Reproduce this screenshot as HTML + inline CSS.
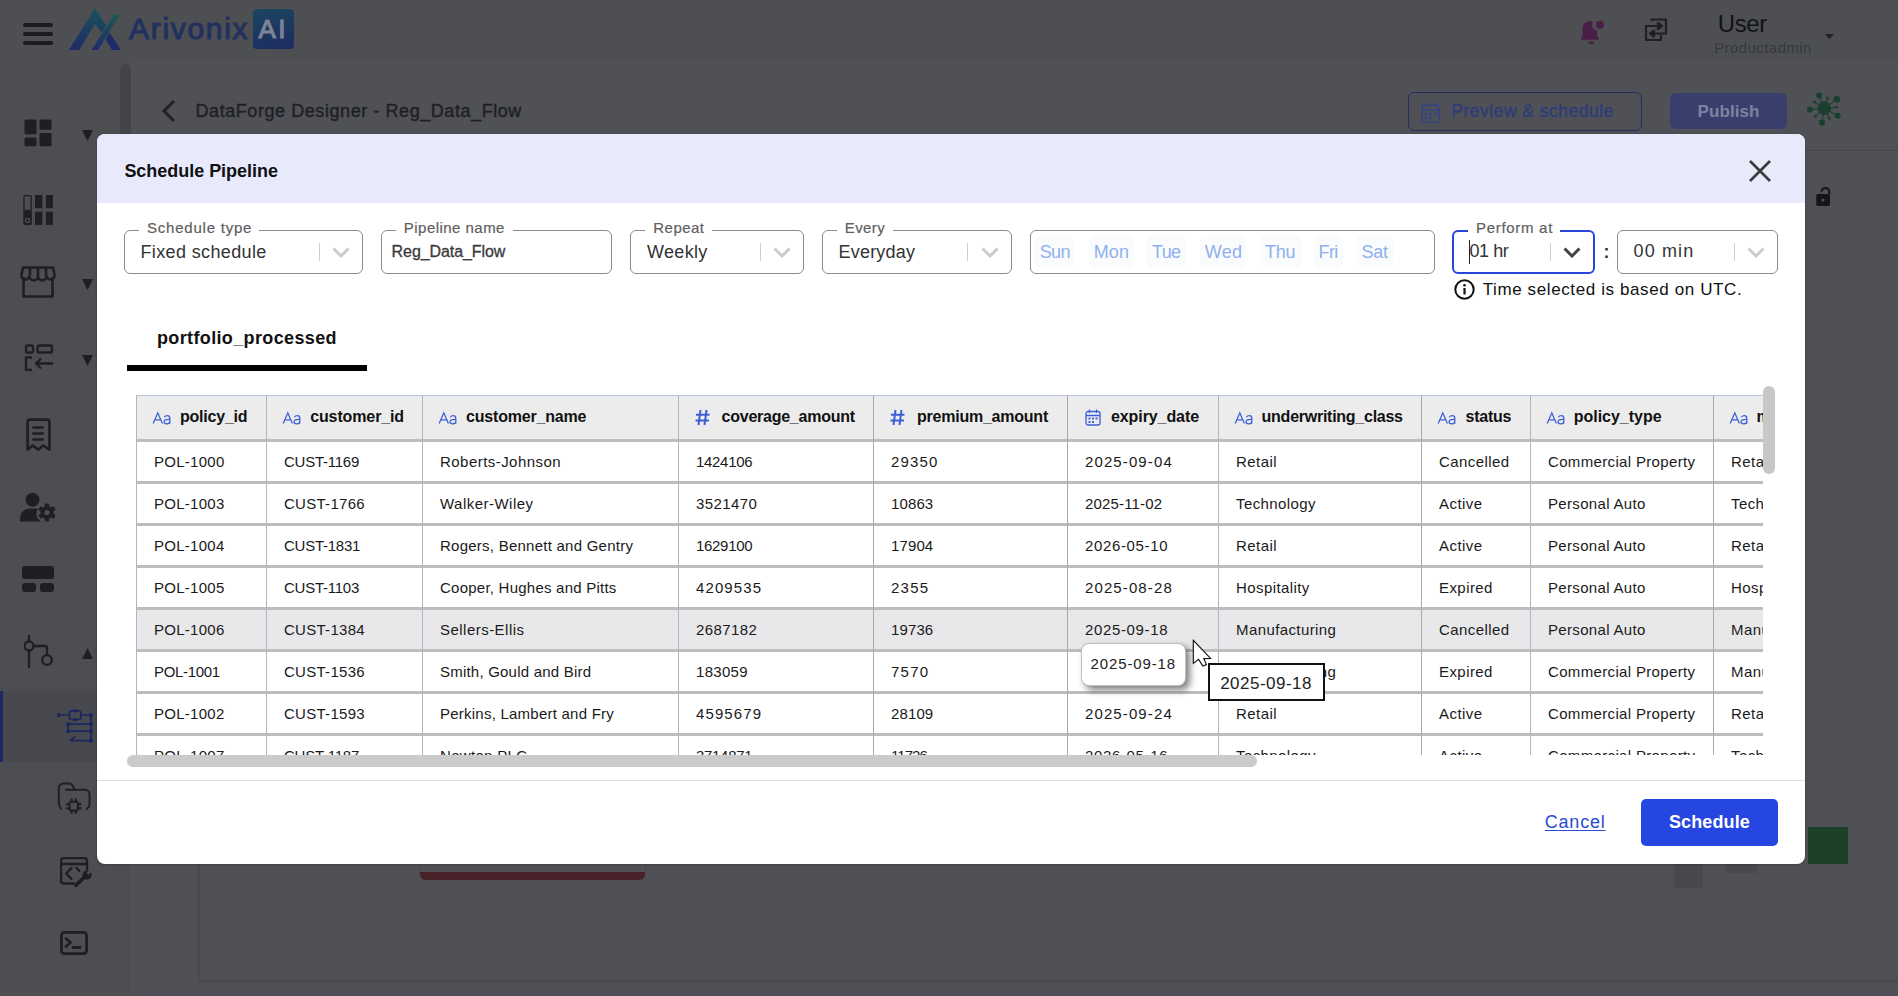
<!DOCTYPE html>
<html><head><meta charset="utf-8"><style>
html,body{margin:0;padding:0;}
body{width:1898px;height:996px;overflow:hidden;position:relative;background:#4f5156;font-family:"Liberation Sans",sans-serif;}
.t{position:absolute;white-space:nowrap;line-height:1;}
.r{position:absolute;}
</style></head><body>
<div class="r" style="left:0px;top:0px;width:1898px;height:61px;background:#4d4f53"></div>
<div class="r" style="left:0px;top:61px;width:130px;height:935px;background:#4c4e52"></div>
<div class="r" style="left:120px;top:64px;width:11px;height:536px;background:#424448;border-radius:6px"></div>
<div class="r" style="left:0px;top:691px;width:97px;height:71px;background:#47494e"></div>
<div class="r" style="left:0px;top:691px;width:3px;height:71px;background:#1d2a62"></div>
<div class="r" style="left:199px;top:150px;width:1699px;height:830px;border-left:1px solid #46484c;box-shadow:0 2px 4px rgba(0,0,0,0.12)"></div>
<div class="r" style="left:130px;top:150px;width:1768px;height:1px;background:#434549"></div>
<div class="r" style="left:23px;top:23px;width:30px;height:4px;background:#1b1c20;border-radius:2px"></div>
<div class="r" style="left:23px;top:32px;width:30px;height:4px;background:#1b1c20;border-radius:2px"></div>
<div class="r" style="left:23px;top:41px;width:30px;height:4px;background:#1b1c20;border-radius:2px"></div>
<svg class="r" style="left:60px;top:0px" width="70" height="60" viewBox="0 0 70 60">
<defs><linearGradient id="lg" x1="0" y1="8" x2="0" y2="50" gradientUnits="userSpaceOnUse"><stop offset="0" stop-color="#1a5459"/><stop offset="1" stop-color="#1e2a68"/></linearGradient>
<linearGradient id="lg2" x1="0" y1="14" x2="0" y2="50" gradientUnits="userSpaceOnUse"><stop offset="0" stop-color="#1a5a55"/><stop offset="1" stop-color="#1f2a6a"/></linearGradient></defs>
<path d="M9 50 L35 8 L46 25.5 L41.8 32.5 L35 24 L19 50 Z" fill="url(#lg)"/>
<path d="M31.5 50 L54.5 14.2 L60.2 14.2 L38 50 Z" fill="url(#lg2)"/>
<path d="M49.5 32.5 L61 50 L52 50 L45.8 39.5 Z" fill="#1e2a68"/>
</svg>
<div class="t" style="left:129.10px;top:14.40px;font-size:30px;color:#22305f;font-weight:400;letter-spacing:1.686px;-webkit-text-stroke:1.1px #22305f">Arivonix</div>
<div class="r" style="left:253px;top:9px;width:41px;height:39.5px;border-radius:4px;background:linear-gradient(165deg,#1a4760,#1e2b62)"></div>
<div class="t" style="left:258.60px;top:15.69px;font-size:26px;color:#7e8496;font-weight:400;letter-spacing:2.200px;-webkit-text-stroke:1px #7e8496">AI</div>
<svg class="r" style="left:1570px;top:10px" width="40" height="40" viewBox="0 0 40 40">
<path d="M11.3 29 L13.2 26.5 V18 A6.5 6.5 0 0 1 22 12.3 A6 6 0 0 0 26.5 21 V26.5 L28.2 29 Z" fill="#4a1f47" stroke="#4a1f47" stroke-width="1.4" stroke-linejoin="round"/>
<rect x="18.5" y="31.6" width="5.8" height="2.4" rx="1.2" fill="#4a1f47"/>
<circle cx="29.9" cy="14.8" r="4" fill="#4a1f47"/>
</svg>
<svg class="r" style="left:1640px;top:14px" width="32" height="32" viewBox="0 0 32 32" fill="none" stroke="#1f2024" stroke-width="2.2" stroke-linejoin="round">
<path d="M11.5 7 V5.5 H26 V19.5 H14"/><path d="M21 21 V26 H6 V12 H18"/>
<path d="M18 9 L22 12 L18 15 Z" fill="#1f2024"/><path d="M14 16.5 L10 19.5 L14 22.5 Z" fill="#1f2024"/>
</svg>
<div class="t" style="left:1717.80px;top:11.58px;font-size:24px;color:#111214;font-weight:400;letter-spacing:-0.400px;">User</div>
<div class="t" style="left:1714.20px;top:40.10px;font-size:15px;color:#36383d;font-weight:400;letter-spacing:0.427px;">Productadmin</div>
<svg class="r" style="left:1825px;top:34px" width="9" height="5" viewBox="0 0 9 5"><path d="M0 0H9L4.5 5Z" fill="#1f2126"/></svg>
<svg class="r" style="left:160px;top:99px" width="17" height="24" viewBox="0 0 17 24"><path d="M14 2 L4 12 L14 22" fill="none" stroke="#202124" stroke-width="3"/></svg>
<div class="t" style="left:195.50px;top:101.56px;font-size:18px;color:#1f2024;font-weight:400;letter-spacing:0.567px;-webkit-text-stroke:0.4px #1f2024">DataForge Designer - Reg_Data_Flow</div>
<div class="r" style="left:1408px;top:92px;width:234px;height:39px;border:1.2px solid #272d5c;border-radius:6px;box-sizing:border-box"></div>
<svg class="r" style="left:1421px;top:101px" width="19" height="22" viewBox="0 0 19 22" fill="none" stroke="#34457f" stroke-width="1.6">
<rect x="1" y="4" width="17" height="17" rx="2"/><path d="M1 9 H18"/><path d="M5 1 V6 M14 1 V6"/>
<circle cx="5" cy="13" r="0.8" fill="#34457f"/><circle cx="9.5" cy="13" r="0.8" fill="#34457f"/><circle cx="14" cy="13" r="0.8" fill="#34457f"/>
<circle cx="5" cy="17" r="0.8" fill="#34457f"/><circle cx="9.5" cy="17" r="0.8" fill="#34457f"/>
</svg>
<div class="t" style="left:1451.40px;top:103.39px;font-size:17.5px;color:#2d3c78;font-weight:400;letter-spacing:0.482px;-webkit-text-stroke:0.3px #2d3c78">Preview &amp; schedule</div>
<div class="r" style="left:1670px;top:93px;width:117px;height:36px;background:#383f6d;border-radius:6px"></div>
<div class="t" style="left:1697.60px;top:102.61px;font-size:17px;color:#7d82a0;font-weight:700;letter-spacing:0.067px;">Publish</div>
<svg class="r" style="left:1800px;top:85px" width="45" height="45" viewBox="0 0 45 45"><circle cx="24.2" cy="23.1" r="6.8" fill="#1a3f2e"/><line x1="24.2" y1="23.1" x2="19.1" y2="10.4" stroke="#1a3f2e" stroke-width="1.1"/><circle cx="19.1" cy="10.4" r="3" fill="#1a3f2e"/><line x1="24.2" y1="23.1" x2="27.7" y2="13.0" stroke="#1a3f2e" stroke-width="1.1"/><circle cx="27.7" cy="13.0" r="1.6" fill="#1a3f2e"/><line x1="24.2" y1="23.1" x2="36.8" y2="14.2" stroke="#1a3f2e" stroke-width="1.1"/><circle cx="36.8" cy="14.2" r="3.3" fill="#1a3f2e"/><line x1="24.2" y1="23.1" x2="14.3" y2="17.0" stroke="#1a3f2e" stroke-width="1.1"/><circle cx="14.3" cy="17.0" r="1.5" fill="#1a3f2e"/><line x1="24.2" y1="23.1" x2="10.0" y2="24.5" stroke="#1a3f2e" stroke-width="1.1"/><circle cx="10.0" cy="24.5" r="3" fill="#1a3f2e"/><line x1="24.2" y1="23.1" x2="36.4" y2="22.2" stroke="#1a3f2e" stroke-width="1.1"/><circle cx="36.4" cy="22.2" r="1.5" fill="#1a3f2e"/><line x1="24.2" y1="23.1" x2="37.6" y2="30.8" stroke="#1a3f2e" stroke-width="1.1"/><circle cx="37.6" cy="30.8" r="3" fill="#1a3f2e"/><line x1="24.2" y1="23.1" x2="15.3" y2="31.3" stroke="#1a3f2e" stroke-width="1.1"/><circle cx="15.3" cy="31.3" r="1.5" fill="#1a3f2e"/><line x1="24.2" y1="23.1" x2="29.2" y2="33.2" stroke="#1a3f2e" stroke-width="1.1"/><circle cx="29.2" cy="33.2" r="1.5" fill="#1a3f2e"/><line x1="24.2" y1="23.1" x2="22.0" y2="37.4" stroke="#1a3f2e" stroke-width="1.1"/><circle cx="22.0" cy="37.4" r="3" fill="#1a3f2e"/></svg>
<div class="r" style="left:1808px;top:177px;width:34px;height:41px;border:1px solid #4c4e52;box-sizing:border-box"></div>
<svg class="r" style="left:1812px;top:184px" width="22" height="26" viewBox="0 0 22 26">
<path d="M9.5 7.8 A3.9 3.9 0 0 1 17.3 7.8 V10.5" fill="none" stroke="#141518" stroke-width="2"/>
<rect x="4.2" y="10" width="13.8" height="12" rx="2" fill="#141518"/><circle cx="11" cy="16" r="1.6" fill="#4f5156"/>
</svg>
<div class="r" style="left:1643px;top:160px;width:227px;height:740px;border:1px solid #4c4e52;border-radius:0 0 8px 8px;box-sizing:border-box"></div>
<div class="r" style="left:1808px;top:827px;width:40px;height:37px;background:#1e3f28"></div>
<div class="r" style="left:1674px;top:864px;width:29px;height:24px;background:#48494e"></div>
<div class="r" style="left:1725px;top:864px;width:32px;height:9px;background:#48494e"></div>
<div class="r" style="left:419px;top:860px;width:227px;height:20px;border:1px solid #47494d;border-top:none;border-radius:0 0 7px 7px;box-sizing:border-box"></div>
<div class="r" style="left:420px;top:872px;width:225px;height:8px;background:#4a2128;border-radius:0 0 6px 6px"></div>
<svg class="r" style="left:24px;top:119px" width="28" height="28" viewBox="0 0 28 28" fill="#1e1f23">
<rect x="0.5" y="0.6" width="12" height="14.6" rx="1.5"/><rect x="15.5" y="0.6" width="12" height="10.2" rx="1.5"/>
<rect x="0.5" y="18.6" width="12" height="8.6" rx="1.5"/><rect x="15.5" y="14" width="12" height="13.2" rx="1.5"/>
</svg>
<svg class="r" style="left:82px;top:130px" width="11" height="11" viewBox="0 0 11 11" preserveAspectRatio="none"><path d="M0 0H11L5.5 11Z" fill="#1e1f23"/></svg>
<svg class="r" style="left:82px;top:279px" width="11" height="11" viewBox="0 0 11 11" preserveAspectRatio="none"><path d="M0 0H11L5.5 11Z" fill="#1e1f23"/></svg>
<svg class="r" style="left:82px;top:355px" width="11" height="11" viewBox="0 0 11 11" preserveAspectRatio="none"><path d="M0 0H11L5.5 11Z" fill="#1e1f23"/></svg>
<svg class="r" style="left:82px;top:648px" width="11" height="11" viewBox="0 0 11 11"><path d="M0 11H11L5.5 0Z" fill="#1e1f23"/></svg>
<svg class="r" style="left:23px;top:195px" width="31" height="31" viewBox="0 0 31 31" fill="#1e1f23">
<rect x="0.3" y="0" width="8.5" height="30" rx="1.6"/><rect x="1.6" y="1.3" width="5.9" height="13.5" fill="#4c4e52"/><circle cx="4.5" cy="25.4" r="2.7" fill="#4c4e52"/><circle cx="4.5" cy="25.4" r="1.3" fill="#1e1f23"/>
<rect x="12" y="0" width="7.4" height="13.2"/><rect x="22.9" y="0" width="7" height="13.2"/>
<rect x="12" y="16.7" width="7.4" height="13.2"/><rect x="22.9" y="16.7" width="7" height="13.2"/>
</svg>
<svg class="r" style="left:20px;top:266px" width="36" height="32" viewBox="0 0 36 32" fill="none" stroke="#1e1f23" stroke-width="2.6" stroke-linejoin="round">
<path d="M3 1.5 H33 L34.5 9 A4 4 0 0 1 26.5 10 A4 4 0 0 1 18 10 A4 4 0 0 1 9.5 10 A4 4 0 0 1 1.5 9 Z"/>
<path d="M10 2 V9 M18 2 V9 M26 2 V9"/><path d="M3.5 11 V30.5 H32.5 V11"/>
</svg>
<svg class="r" style="left:24px;top:344px" width="31" height="27" viewBox="0 0 31 27" fill="none" stroke="#1e1f23" stroke-width="2.3">
<rect x="2" y="1.5" width="7" height="7" rx="1.5"/><rect x="13.5" y="1.5" width="14.5" height="7" rx="1.5"/>
<path d="M8 13.5 H2 V26 H8"/><path d="M29 19.5 H12 M17 14.5 L12 19.5 L17 24.5"/>
</svg>
<svg class="r" style="left:26px;top:418px" width="25" height="34" viewBox="0 0 25 34" fill="none" stroke="#1e1f23" stroke-width="2.6" stroke-linejoin="round" stroke-linecap="round">
<path d="M1.6 31.6 V3.6 A2 2 0 0 1 3.6 1.6 H21.4 A2 2 0 0 1 23.4 3.6 V31.6 L17.1 27.6 L12.5 31.6 L6.6 27.6 Z"/><path d="M7.4 9.5 H16.7 M7.4 15.5 H16.7 M7.4 21.5 H16.7"/>
</svg>
<svg class="r" style="left:20px;top:492px" width="36" height="32" viewBox="0 0 36 32" fill="#1e1f23">
<circle cx="12.5" cy="7.7" r="7"/><path d="M0 29.5 V26 A9.5 9.5 0 0 1 9.5 16.5 H15.5 A9 9 0 0 1 18 17 A8.5 8.5 0 0 0 21 29.5 Z"/>
<circle cx="27" cy="20.5" r="6.5"/><rect x="24.8" y="11.6" width="4.4" height="4.5" rx="0.8" transform="rotate(0 27 20.5)"/><rect x="24.8" y="11.6" width="4.4" height="4.5" rx="0.8" transform="rotate(60 27 20.5)"/><rect x="24.8" y="11.6" width="4.4" height="4.5" rx="0.8" transform="rotate(120 27 20.5)"/><rect x="24.8" y="11.6" width="4.4" height="4.5" rx="0.8" transform="rotate(180 27 20.5)"/><rect x="24.8" y="11.6" width="4.4" height="4.5" rx="0.8" transform="rotate(240 27 20.5)"/><rect x="24.8" y="11.6" width="4.4" height="4.5" rx="0.8" transform="rotate(300 27 20.5)"/><circle cx="27" cy="20.5" r="2.6" fill="#4c4e52"/>
</svg>
<svg class="r" style="left:22px;top:566px" width="32" height="26" viewBox="0 0 32 26" fill="#1e1f23">
<rect x="0" y="0" width="32" height="13" rx="3"/><rect x="0" y="17" width="14" height="9" rx="3"/><rect x="18" y="17" width="14" height="9" rx="3"/>
</svg>
<svg class="r" style="left:24px;top:635px" width="30" height="33" viewBox="0 0 30 33" fill="none" stroke="#1e1f23" stroke-width="2.3">
<path d="M5 0 V33"/><circle cx="5" cy="11" r="4.5" fill="#4c4e52"/><path d="M9.5 11 H21 Q23 11 23 13 V20"/><circle cx="23" cy="25" r="4.8"/>
</svg>
<svg class="r" style="left:57px;top:709px" width="37" height="35" viewBox="0 0 37 35" fill="none" stroke="#1c2760" stroke-width="1.7"><path d="M1.5 6 H12.5 M23.8 6 H34 V31.6 M11 15.2 H34 M11 15.2 V22.2 M11 22.2 H34 M13 31.6 H34 M13 31.6 L18 27.5"/><rect x="12.5" y="1.8" width="11.3" height="8.7" rx="1.5"/><rect x="-0.30000000000000004" y="4.2" width="3.6" height="3.6" fill="#1c2760" stroke="none"/><rect x="16.4" y="0.19999999999999996" width="3.2" height="3.2" fill="#1c2760" stroke="none"/><rect x="16.4" y="8.9" width="3.2" height="3.2" fill="#1c2760" stroke="none"/><rect x="32.2" y="4.2" width="3.6" height="3.6" fill="#1c2760" stroke="none"/><rect x="9.2" y="13.399999999999999" width="3.6" height="3.6" fill="#1c2760" stroke="none"/><rect x="32.2" y="13.399999999999999" width="3.6" height="3.6" fill="#1c2760" stroke="none"/><rect x="9.2" y="20.4" width="3.6" height="3.6" fill="#1c2760" stroke="none"/><rect x="32.2" y="20.4" width="3.6" height="3.6" fill="#1c2760" stroke="none"/><rect x="32.2" y="29.8" width="3.6" height="3.6" fill="#1c2760" stroke="none"/></svg>
<svg class="r" style="left:50px;top:775px" width="50" height="50" viewBox="0 0 50 50" fill="none" stroke="#1e1f23" stroke-width="2" stroke-linecap="round" stroke-linejoin="round">
<path d="M11 33.8 Q8.8 31.5 8.8 27.5 V13.2 A4.7 4.7 0 0 1 13.5 8.5 H19.5 Q22 8.5 23.5 12.5 L24.3 14.7"/>
<path d="M16 14.8 H35 A4.5 4.5 0 0 1 39.5 19.3 V29.5 Q39.5 32 36.8 34"/>
<rect x="19.6" y="26.8" width="8.3" height="8.7" rx="1.3"/>
<path d="M21.6 23.4 V26.8 M25.9 23.4 V26.8 M21.6 35.5 V38.8 M25.9 35.5 V38.8 M16 29.2 H19.6 M16 33.2 H19.6 M27.9 29.2 H31.5 M27.9 33.2 H31.5" stroke-linecap="butt"/>
</svg>
<svg class="r" style="left:60px;top:857px" width="34" height="32" viewBox="0 0 34 32" fill="none" stroke="#1e1f23" stroke-width="2.4" stroke-linecap="round" stroke-linejoin="round">
<path d="M14 26.5 H3.8 A2.8 2.8 0 0 1 1 23.7 V3.8 A2.8 2.8 0 0 1 3.8 1 H24.2 A2.8 2.8 0 0 1 27 3.8 V12.5"/><path d="M1 7 H27"/>
<path d="M11.3 11.2 L6.2 16.5 L11.3 21.8 M16.5 11 L19.3 13.8"/>
<path d="M16 28.3 L24 20.5" stroke-width="3.6"/>
<circle cx="27" cy="18" r="4.6" fill="#1e1f23" stroke="none"/>
<path d="M27.5 16.8 L31.5 12.8" stroke="#4c4e52" stroke-width="2.6" stroke-linecap="butt"/>
</svg>
<svg class="r" style="left:60px;top:931px" width="28" height="24" viewBox="0 0 28 24" fill="none" stroke="#1e1f23" stroke-width="2.8" stroke-linecap="round" stroke-linejoin="round">
<rect x="1.4" y="1.4" width="25.2" height="21.2" rx="3"/><path d="M6 7.5 L10.5 11.5 L6 15.5 M13 16.5 H20"/>
</svg>
<div class="r" style="left:97px;top:134px;width:1708px;height:730px;background:#fff;border-radius:8px;overflow:hidden;box-shadow:0 1px 3px rgba(0,0,0,0.25)">
<div class="r" style="left:0;top:0;width:1708px;height:69px;background:#e8eafc"></div>
</div>
<div class="t" style="left:124.40px;top:161.76px;font-size:18px;color:#111;font-weight:700;letter-spacing:-0.031px;">Schedule Pipeline</div>
<svg class="r" style="left:1748px;top:159px" width="24" height="24" viewBox="0 0 24 24"><path d="M2 2 L22 22 M22 2 L2 22" stroke="#3a3a3a" stroke-width="2.6"/></svg>
<div class="r" style="left:124px;top:230px;width:239px;height:44px;border:1px solid #8c8c8c;border-radius:6px;box-sizing:border-box"></div>
<div class="r" style="left:139px;top:228px;width:120px;height:5px;background:#fff"></div>
<div class="t" style="left:147.00px;top:219.60px;font-size:15px;color:#606060;font-weight:400;letter-spacing:0.775px;-webkit-text-stroke:0.2px #606060">Schedule type</div>
<div class="t" style="left:140.40px;top:243.06px;font-size:18px;color:#333;font-weight:400;letter-spacing:0.377px;">Fixed schedule</div>
<div class="r" style="left:319px;top:243px;width:1px;height:18px;background:#cccccc"></div>
<svg class="r" style="left:332px;top:247px" width="18" height="11" viewBox="0 0 18 11"><path d="M1.5 1.5 L9 9 L16.5 1.5" fill="none" stroke="#cccccc" stroke-width="3"/></svg>
<div class="r" style="left:381px;top:230px;width:231px;height:44px;border:1px solid #8c8c8c;border-radius:6px;box-sizing:border-box"></div>
<div class="r" style="left:396px;top:228px;width:117px;height:5px;background:#fff"></div>
<div class="t" style="left:403.80px;top:219.60px;font-size:15px;color:#606060;font-weight:400;letter-spacing:0.467px;-webkit-text-stroke:0.2px #606060">Pipeline name</div>
<div class="t" style="left:391.60px;top:244.26px;font-size:16px;color:#3a3a3a;font-weight:400;letter-spacing:-0.083px;-webkit-text-stroke:0.3px #3a3a3a">Reg_Data_Flow</div>
<div class="r" style="left:630px;top:230px;width:174px;height:44px;border:1px solid #8c8c8c;border-radius:6px;box-sizing:border-box"></div>
<div class="r" style="left:645px;top:228px;width:67px;height:5px;background:#fff"></div>
<div class="t" style="left:653.30px;top:219.60px;font-size:15px;color:#606060;font-weight:400;letter-spacing:0.460px;-webkit-text-stroke:0.2px #606060">Repeat</div>
<div class="t" style="left:647.00px;top:243.06px;font-size:18px;color:#333;font-weight:400;letter-spacing:0.320px;">Weekly</div>
<div class="r" style="left:760px;top:243px;width:1px;height:18px;background:#cccccc"></div>
<svg class="r" style="left:773px;top:247px" width="18" height="11" viewBox="0 0 18 11"><path d="M1.5 1.5 L9 9 L16.5 1.5" fill="none" stroke="#cccccc" stroke-width="3"/></svg>
<div class="r" style="left:822px;top:230px;width:190px;height:44px;border:1px solid #8c8c8c;border-radius:6px;box-sizing:border-box"></div>
<div class="r" style="left:837px;top:228px;width:56px;height:5px;background:#fff"></div>
<div class="t" style="left:844.80px;top:219.60px;font-size:15px;color:#606060;font-weight:400;letter-spacing:0.375px;-webkit-text-stroke:0.2px #606060">Every</div>
<div class="t" style="left:838.50px;top:243.06px;font-size:18px;color:#333;font-weight:400;letter-spacing:0.214px;">Everyday</div>
<div class="r" style="left:967px;top:243px;width:1px;height:18px;background:#cccccc"></div>
<svg class="r" style="left:981px;top:247px" width="18" height="11" viewBox="0 0 18 11"><path d="M1.5 1.5 L9 9 L16.5 1.5" fill="none" stroke="#cccccc" stroke-width="3"/></svg>
<div class="r" style="left:1030px;top:230px;width:405px;height:44px;border:1px solid #8c8c8c;border-radius:6px;box-sizing:border-box"></div>
<div class="r" style="left:1035px;top:235px;width:40px;height:33px;background:#fafbfc;border-radius:6px"></div>
<div class="t" style="left:1039.70px;top:242.76px;font-size:18px;color:#8fb0ef;font-weight:400;letter-spacing:-0.600px;">Sun</div>
<div class="r" style="left:1089px;top:235px;width:45px;height:33px;background:#fafbfc;border-radius:6px"></div>
<div class="t" style="left:1093.70px;top:242.76px;font-size:18px;color:#8fb0ef;font-weight:400;letter-spacing:0.150px;">Mon</div>
<div class="r" style="left:1147px;top:235px;width:39px;height:33px;background:#fafbfc;border-radius:6px"></div>
<div class="t" style="left:1152.00px;top:242.76px;font-size:18px;color:#8fb0ef;font-weight:400;letter-spacing:-0.700px;">Tue</div>
<div class="r" style="left:1200px;top:235px;width:46px;height:33px;background:#fafbfc;border-radius:6px"></div>
<div class="t" style="left:1204.80px;top:242.76px;font-size:18px;color:#8fb0ef;font-weight:400;letter-spacing:0.250px;">Wed</div>
<div class="r" style="left:1260px;top:235px;width:41px;height:33px;background:#fafbfc;border-radius:6px"></div>
<div class="t" style="left:1265.00px;top:242.76px;font-size:18px;color:#8fb0ef;font-weight:400;letter-spacing:-0.300px;">Thu</div>
<div class="r" style="left:1314px;top:235px;width:29px;height:33px;background:#fafbfc;border-radius:6px"></div>
<div class="t" style="left:1318.60px;top:242.76px;font-size:18px;color:#8fb0ef;font-weight:400;letter-spacing:-0.650px;">Fri</div>
<div class="r" style="left:1356px;top:235px;width:37px;height:33px;background:#fafbfc;border-radius:6px"></div>
<div class="t" style="left:1361.50px;top:242.76px;font-size:18px;color:#8fb0ef;font-weight:400;letter-spacing:-0.250px;">Sat</div>
<div class="r" style="left:1452px;top:230px;width:143px;height:44px;border:2px solid #2a45d8;border-radius:6px;box-sizing:border-box"></div>
<div class="r" style="left:1468px;top:228px;width:92px;height:5px;background:#fff"></div>
<div class="t" style="left:1476.00px;top:219.60px;font-size:15px;color:#606060;font-weight:400;letter-spacing:0.700px;-webkit-text-stroke:0.2px #606060">Perform at</div>
<div class="t" style="left:1469.40px;top:242.26px;font-size:18px;color:#333;font-weight:400;letter-spacing:-0.425px;">01 hr</div>
<div class="r" style="left:1469px;top:240px;width:1px;height:24px;background:#222"></div>
<div class="r" style="left:1550px;top:243px;width:1px;height:18px;background:#cccccc"></div>
<svg class="r" style="left:1563px;top:247px" width="18" height="11" viewBox="0 0 18 11"><path d="M1.5 1.5 L9 9 L16.5 1.5" fill="none" stroke="#444444" stroke-width="3"/></svg>
<div class="t" style="left:1603.50px;top:242.76px;font-size:18px;color:#333;font-weight:700;letter-spacing:0.000px;">:</div>
<div class="r" style="left:1617px;top:230px;width:161px;height:44px;border:1px solid #8c8c8c;border-radius:6px;box-sizing:border-box"></div>
<div class="t" style="left:1633.50px;top:242.26px;font-size:18px;color:#333;font-weight:400;letter-spacing:1.140px;">00 min</div>
<div class="r" style="left:1734px;top:243px;width:1px;height:18px;background:#cccccc"></div>
<svg class="r" style="left:1747px;top:247px" width="18" height="11" viewBox="0 0 18 11"><path d="M1.5 1.5 L9 9 L16.5 1.5" fill="none" stroke="#cccccc" stroke-width="3"/></svg>
<svg class="r" style="left:1454px;top:279px" width="21" height="21" viewBox="0 0 21 21"><circle cx="10.5" cy="10.5" r="9.2" fill="none" stroke="#111" stroke-width="2"/><rect x="9.4" y="9" width="2.2" height="6.5" fill="#111"/><circle cx="10.5" cy="6.3" r="1.3" fill="#111"/></svg>
<div class="t" style="left:1482.70px;top:281.41px;font-size:17px;color:#111;font-weight:400;letter-spacing:0.610px;">Time selected is based on UTC.</div>
<div class="t" style="left:157.00px;top:328.76px;font-size:18px;color:#111;font-weight:700;letter-spacing:0.361px;">portfolio_processed</div>
<div class="r" style="left:127px;top:365px;width:240px;height:6px;background:#000"></div>
<div class="r" style="left:127px;top:380px;width:1636px;height:375px;overflow:hidden">
<div class="r" style="left:9px;top:15px;width:1764px;height:44px;background:#ececec"></div>
<div class="r" style="left:9px;top:15px;width:1764px;height:1px;background:#b7c6d8"></div>
<div class="r" style="left:9px;top:230px;width:1764px;height:39px;background:#e8e8ea"></div>
<div class="r" style="left:9px;top:59px;width:1764px;height:3px;background:#bdbdbd"></div>
<div class="r" style="left:9px;top:101px;width:1764px;height:3px;background:#bdbdbd"></div>
<div class="r" style="left:9px;top:143px;width:1764px;height:3px;background:#bdbdbd"></div>
<div class="r" style="left:9px;top:185px;width:1764px;height:3px;background:#bdbdbd"></div>
<div class="r" style="left:9px;top:227px;width:1764px;height:3px;background:#bdbdbd"></div>
<div class="r" style="left:9px;top:269px;width:1764px;height:3px;background:#bdbdbd"></div>
<div class="r" style="left:9px;top:311px;width:1764px;height:3px;background:#bdbdbd"></div>
<div class="r" style="left:9px;top:353px;width:1764px;height:3px;background:#bdbdbd"></div>
<div class="r" style="left:9px;top:395px;width:1764px;height:3px;background:#bdbdbd"></div>
<div class="r" style="left:9px;top:15px;width:1px;height:405px;background:#a9b8c9"></div>
<div class="r" style="left:139px;top:15px;width:1px;height:405px;background:#a9b8c9"></div>
<div class="r" style="left:295px;top:15px;width:1px;height:405px;background:#a9b8c9"></div>
<div class="r" style="left:551px;top:15px;width:1px;height:405px;background:#a9b8c9"></div>
<div class="r" style="left:746px;top:15px;width:1px;height:405px;background:#aaaaaa"></div>
<div class="r" style="left:940px;top:15px;width:1px;height:405px;background:#aaaaaa"></div>
<div class="r" style="left:1091px;top:15px;width:1px;height:405px;background:#a9b8c9"></div>
<div class="r" style="left:1294px;top:15px;width:1px;height:405px;background:#aaaaaa"></div>
<div class="r" style="left:1403px;top:15px;width:1px;height:405px;background:#a9b8c9"></div>
<div class="r" style="left:1586px;top:15px;width:1px;height:405px;background:#aaaaaa"></div>
<svg class="r" style="left:25.0px;top:31px" width="20" height="14" viewBox="0 0 20 14" fill="none" stroke="#3d5fd6" stroke-width="1.25"><path d="M1.2 12.6 L5.8 1.8 L10.4 12.6 M2.9 8.8 H8.8"/><path d="M12.3 6.2 Q13.2 4.7 15.2 4.7 Q17.8 4.7 17.8 7.2 V12.8 M17.8 8.4 Q12 8.2 12 10.8 Q12 12.9 14.6 12.9 Q17.4 12.9 17.8 10.6"/></svg>
<div class="t" style="left:53.00px;top:29.36px;font-size:16px;color:#111;font-weight:700;letter-spacing:-0.225px;">policy_id</div>
<svg class="r" style="left:155.0px;top:31px" width="20" height="14" viewBox="0 0 20 14" fill="none" stroke="#3d5fd6" stroke-width="1.25"><path d="M1.2 12.6 L5.8 1.8 L10.4 12.6 M2.9 8.8 H8.8"/><path d="M12.3 6.2 Q13.2 4.7 15.2 4.7 Q17.8 4.7 17.8 7.2 V12.8 M17.8 8.4 Q12 8.2 12 10.8 Q12 12.9 14.6 12.9 Q17.4 12.9 17.8 10.6"/></svg>
<div class="t" style="left:183.20px;top:29.36px;font-size:16px;color:#111;font-weight:700;letter-spacing:-0.120px;">customer_id</div>
<svg class="r" style="left:311.0px;top:31px" width="20" height="14" viewBox="0 0 20 14" fill="none" stroke="#3d5fd6" stroke-width="1.25"><path d="M1.2 12.6 L5.8 1.8 L10.4 12.6 M2.9 8.8 H8.8"/><path d="M12.3 6.2 Q13.2 4.7 15.2 4.7 Q17.8 4.7 17.8 7.2 V12.8 M17.8 8.4 Q12 8.2 12 10.8 Q12 12.9 14.6 12.9 Q17.4 12.9 17.8 10.6"/></svg>
<div class="t" style="left:339.10px;top:29.36px;font-size:16px;color:#111;font-weight:700;letter-spacing:-0.208px;">customer_name</div>
<svg class="r" style="left:568.0px;top:29px" width="15" height="17" viewBox="0 0 15 17" fill="none" stroke="#3d5fd6" stroke-width="2"><path d="M5.5 1 L3.5 16 M11.5 1 L9.5 16 M1 5.8 H14.5 M0.5 11.5 H14"/></svg>
<div class="t" style="left:594.60px;top:29.36px;font-size:16px;color:#111;font-weight:700;letter-spacing:-0.250px;">coverage_amount</div>
<svg class="r" style="left:763.0px;top:29px" width="15" height="17" viewBox="0 0 15 17" fill="none" stroke="#3d5fd6" stroke-width="2"><path d="M5.5 1 L3.5 16 M11.5 1 L9.5 16 M1 5.8 H14.5 M0.5 11.5 H14"/></svg>
<div class="t" style="left:790.00px;top:29.36px;font-size:16px;color:#111;font-weight:700;letter-spacing:-0.231px;">premium_amount</div>
<svg class="r" style="left:957.5px;top:29px" width="16" height="17" viewBox="0 0 16 17" fill="none" stroke="#3d5fd6" stroke-width="1.3"><rect x="1" y="2.5" width="14" height="13.5" rx="2"/><path d="M1 6.5 H15 M4.5 0.5 V4 M11.5 0.5 V4"/><g fill="#3d5fd6" stroke="none"><rect x="3.5" y="8.5" width="2" height="2"/><rect x="7" y="8.5" width="2" height="2"/><rect x="10.5" y="8.5" width="2" height="2"/><rect x="3.5" y="12" width="2" height="2"/><rect x="7" y="12" width="2" height="2"/></g></svg>
<div class="t" style="left:984.00px;top:29.36px;font-size:16px;color:#111;font-weight:700;letter-spacing:-0.090px;">expiry_date</div>
<svg class="r" style="left:1107.0px;top:31px" width="20" height="14" viewBox="0 0 20 14" fill="none" stroke="#3d5fd6" stroke-width="1.25"><path d="M1.2 12.6 L5.8 1.8 L10.4 12.6 M2.9 8.8 H8.8"/><path d="M12.3 6.2 Q13.2 4.7 15.2 4.7 Q17.8 4.7 17.8 7.2 V12.8 M17.8 8.4 Q12 8.2 12 10.8 Q12 12.9 14.6 12.9 Q17.4 12.9 17.8 10.6"/></svg>
<div class="t" style="left:1134.60px;top:29.36px;font-size:16px;color:#111;font-weight:700;letter-spacing:-0.259px;">underwriting_class</div>
<svg class="r" style="left:1310.0px;top:31px" width="20" height="14" viewBox="0 0 20 14" fill="none" stroke="#3d5fd6" stroke-width="1.25"><path d="M1.2 12.6 L5.8 1.8 L10.4 12.6 M2.9 8.8 H8.8"/><path d="M12.3 6.2 Q13.2 4.7 15.2 4.7 Q17.8 4.7 17.8 7.2 V12.8 M17.8 8.4 Q12 8.2 12 10.8 Q12 12.9 14.6 12.9 Q17.4 12.9 17.8 10.6"/></svg>
<div class="t" style="left:1338.60px;top:29.36px;font-size:16px;color:#111;font-weight:700;letter-spacing:-0.260px;">status</div>
<svg class="r" style="left:1419.0px;top:31px" width="20" height="14" viewBox="0 0 20 14" fill="none" stroke="#3d5fd6" stroke-width="1.25"><path d="M1.2 12.6 L5.8 1.8 L10.4 12.6 M2.9 8.8 H8.8"/><path d="M12.3 6.2 Q13.2 4.7 15.2 4.7 Q17.8 4.7 17.8 7.2 V12.8 M17.8 8.4 Q12 8.2 12 10.8 Q12 12.9 14.6 12.9 Q17.4 12.9 17.8 10.6"/></svg>
<div class="t" style="left:1446.70px;top:29.36px;font-size:16px;color:#111;font-weight:700;letter-spacing:-0.010px;">policy_type</div>
<svg class="r" style="left:1602.0px;top:31px" width="20" height="14" viewBox="0 0 20 14" fill="none" stroke="#3d5fd6" stroke-width="1.25"><path d="M1.2 12.6 L5.8 1.8 L10.4 12.6 M2.9 8.8 H8.8"/><path d="M12.3 6.2 Q13.2 4.7 15.2 4.7 Q17.8 4.7 17.8 7.2 V12.8 M17.8 8.4 Q12 8.2 12 10.8 Q12 12.9 14.6 12.9 Q17.4 12.9 17.8 10.6"/></svg>
<div class="t" style="left:1629.40px;top:29.36px;font-size:16px;color:#111;font-weight:700;letter-spacing:10.400px;">ma</div>
<div class="t" style="left:27.00px;top:74.30px;font-size:15px;color:#1a1a1a;font-weight:400;letter-spacing:0.266px;">POL-1000</div>
<div class="t" style="left:157.00px;top:74.30px;font-size:15px;color:#1a1a1a;font-weight:400;letter-spacing:-0.252px;">CUST-1169</div>
<div class="t" style="left:313.00px;top:74.30px;font-size:15px;color:#1a1a1a;font-weight:400;letter-spacing:0.456px;">Roberts-Johnson</div>
<div class="t" style="left:569.00px;top:74.30px;font-size:15px;color:#1a1a1a;font-weight:400;letter-spacing:-0.308px;">1424106</div>
<div class="t" style="left:764.00px;top:74.30px;font-size:15px;color:#1a1a1a;font-weight:400;letter-spacing:1.188px;">29350</div>
<div class="t" style="left:958.00px;top:74.30px;font-size:15px;color:#1a1a1a;font-weight:400;letter-spacing:1.111px;">2025-09-04</div>
<div class="t" style="left:1109.00px;top:74.30px;font-size:15px;color:#1a1a1a;font-weight:400;letter-spacing:0.444px;">Retail</div>
<div class="t" style="left:1312.00px;top:74.30px;font-size:15px;color:#1a1a1a;font-weight:400;letter-spacing:0.416px;">Cancelled</div>
<div class="t" style="left:1421.00px;top:74.30px;font-size:15px;color:#1a1a1a;font-weight:400;letter-spacing:0.342px;">Commercial Property</div>
<div class="t" style="left:1604.00px;top:74.30px;font-size:15px;color:#1a1a1a;font-weight:400;letter-spacing:0.444px;">Retail</div>
<div class="t" style="left:27.00px;top:116.30px;font-size:15px;color:#1a1a1a;font-weight:400;letter-spacing:0.266px;">POL-1003</div>
<div class="t" style="left:157.00px;top:116.30px;font-size:15px;color:#1a1a1a;font-weight:400;letter-spacing:0.279px;">CUST-1766</div>
<div class="t" style="left:313.00px;top:116.30px;font-size:15px;color:#1a1a1a;font-weight:400;letter-spacing:0.479px;">Walker-Wiley</div>
<div class="t" style="left:569.00px;top:116.30px;font-size:15px;color:#1a1a1a;font-weight:400;letter-spacing:0.400px;">3521470</div>
<div class="t" style="left:764.00px;top:116.30px;font-size:15px;color:#1a1a1a;font-weight:400;letter-spacing:0.125px;">10863</div>
<div class="t" style="left:958.00px;top:116.30px;font-size:15px;color:#1a1a1a;font-weight:400;letter-spacing:0.167px;">2025-11-02</div>
<div class="t" style="left:1109.00px;top:116.30px;font-size:15px;color:#1a1a1a;font-weight:400;letter-spacing:0.411px;">Technology</div>
<div class="t" style="left:1312.00px;top:116.30px;font-size:15px;color:#1a1a1a;font-weight:400;letter-spacing:0.444px;">Active</div>
<div class="t" style="left:1421.00px;top:116.30px;font-size:15px;color:#1a1a1a;font-weight:400;letter-spacing:0.328px;">Personal Auto</div>
<div class="t" style="left:1604.00px;top:116.30px;font-size:15px;color:#1a1a1a;font-weight:400;letter-spacing:0.411px;">Technology</div>
<div class="t" style="left:27.00px;top:158.30px;font-size:15px;color:#1a1a1a;font-weight:400;letter-spacing:0.266px;">POL-1004</div>
<div class="t" style="left:157.00px;top:158.30px;font-size:15px;color:#1a1a1a;font-weight:400;letter-spacing:-0.253px;">CUST-1831</div>
<div class="t" style="left:313.00px;top:158.30px;font-size:15px;color:#1a1a1a;font-weight:400;letter-spacing:0.246px;">Rogers, Bennett and Gentry</div>
<div class="t" style="left:569.00px;top:158.30px;font-size:15px;color:#1a1a1a;font-weight:400;letter-spacing:-0.308px;">1629100</div>
<div class="t" style="left:764.00px;top:158.30px;font-size:15px;color:#1a1a1a;font-weight:400;letter-spacing:0.125px;">17904</div>
<div class="t" style="left:958.00px;top:158.30px;font-size:15px;color:#1a1a1a;font-weight:400;letter-spacing:0.639px;">2026-05-10</div>
<div class="t" style="left:1109.00px;top:158.30px;font-size:15px;color:#1a1a1a;font-weight:400;letter-spacing:0.444px;">Retail</div>
<div class="t" style="left:1312.00px;top:158.30px;font-size:15px;color:#1a1a1a;font-weight:400;letter-spacing:0.444px;">Active</div>
<div class="t" style="left:1421.00px;top:158.30px;font-size:15px;color:#1a1a1a;font-weight:400;letter-spacing:0.328px;">Personal Auto</div>
<div class="t" style="left:1604.00px;top:158.30px;font-size:15px;color:#1a1a1a;font-weight:400;letter-spacing:0.444px;">Retail</div>
<div class="t" style="left:27.00px;top:200.30px;font-size:15px;color:#1a1a1a;font-weight:400;letter-spacing:0.266px;">POL-1005</div>
<div class="t" style="left:157.00px;top:200.30px;font-size:15px;color:#1a1a1a;font-weight:400;letter-spacing:-0.252px;">CUST-1103</div>
<div class="t" style="left:313.00px;top:200.30px;font-size:15px;color:#1a1a1a;font-weight:400;letter-spacing:0.235px;">Cooper, Hughes and Pitts</div>
<div class="t" style="left:569.00px;top:200.30px;font-size:15px;color:#1a1a1a;font-weight:400;letter-spacing:1.108px;">4209535</div>
<div class="t" style="left:764.00px;top:200.30px;font-size:15px;color:#1a1a1a;font-weight:400;letter-spacing:1.267px;">2355</div>
<div class="t" style="left:958.00px;top:200.30px;font-size:15px;color:#1a1a1a;font-weight:400;letter-spacing:1.111px;">2025-08-28</div>
<div class="t" style="left:1109.00px;top:200.30px;font-size:15px;color:#1a1a1a;font-weight:400;letter-spacing:0.407px;">Hospitality</div>
<div class="t" style="left:1312.00px;top:200.30px;font-size:15px;color:#1a1a1a;font-weight:400;letter-spacing:0.432px;">Expired</div>
<div class="t" style="left:1421.00px;top:200.30px;font-size:15px;color:#1a1a1a;font-weight:400;letter-spacing:0.328px;">Personal Auto</div>
<div class="t" style="left:1604.00px;top:200.30px;font-size:15px;color:#1a1a1a;font-weight:400;letter-spacing:0.407px;">Hospitality</div>
<div class="t" style="left:27.00px;top:242.30px;font-size:15px;color:#1a1a1a;font-weight:400;letter-spacing:0.266px;">POL-1006</div>
<div class="t" style="left:157.00px;top:242.30px;font-size:15px;color:#1a1a1a;font-weight:400;letter-spacing:0.279px;">CUST-1384</div>
<div class="t" style="left:313.00px;top:242.30px;font-size:15px;color:#1a1a1a;font-weight:400;letter-spacing:0.470px;">Sellers-Ellis</div>
<div class="t" style="left:569.00px;top:242.30px;font-size:15px;color:#1a1a1a;font-weight:400;letter-spacing:0.400px;">2687182</div>
<div class="t" style="left:764.00px;top:242.30px;font-size:15px;color:#1a1a1a;font-weight:400;letter-spacing:0.125px;">19736</div>
<div class="t" style="left:958.00px;top:242.30px;font-size:15px;color:#1a1a1a;font-weight:400;letter-spacing:0.639px;">2025-09-18</div>
<div class="t" style="left:1109.00px;top:242.30px;font-size:15px;color:#1a1a1a;font-weight:400;letter-spacing:0.401px;">Manufacturing</div>
<div class="t" style="left:1312.00px;top:242.30px;font-size:15px;color:#1a1a1a;font-weight:400;letter-spacing:0.416px;">Cancelled</div>
<div class="t" style="left:1421.00px;top:242.30px;font-size:15px;color:#1a1a1a;font-weight:400;letter-spacing:0.328px;">Personal Auto</div>
<div class="t" style="left:1604.00px;top:242.30px;font-size:15px;color:#1a1a1a;font-weight:400;letter-spacing:0.401px;">Manufacturing</div>
<div class="t" style="left:27.00px;top:284.30px;font-size:15px;color:#1a1a1a;font-weight:400;letter-spacing:-0.341px;">POL-1001</div>
<div class="t" style="left:157.00px;top:284.30px;font-size:15px;color:#1a1a1a;font-weight:400;letter-spacing:0.279px;">CUST-1536</div>
<div class="t" style="left:313.00px;top:284.30px;font-size:15px;color:#1a1a1a;font-weight:400;letter-spacing:0.215px;">Smith, Gould and Bird</div>
<div class="t" style="left:569.00px;top:284.30px;font-size:15px;color:#1a1a1a;font-weight:400;letter-spacing:0.290px;">183059</div>
<div class="t" style="left:764.00px;top:284.30px;font-size:15px;color:#1a1a1a;font-weight:400;letter-spacing:1.267px;">7570</div>
<div class="t" style="left:958.00px;top:284.30px;font-size:15px;color:#1a1a1a;font-weight:400;letter-spacing:0.639px;">2025-09-18</div>
<div class="t" style="left:1109.00px;top:284.30px;font-size:15px;color:#1a1a1a;font-weight:400;letter-spacing:0.401px;">Manufacturing</div>
<div class="t" style="left:1312.00px;top:284.30px;font-size:15px;color:#1a1a1a;font-weight:400;letter-spacing:0.432px;">Expired</div>
<div class="t" style="left:1421.00px;top:284.30px;font-size:15px;color:#1a1a1a;font-weight:400;letter-spacing:0.342px;">Commercial Property</div>
<div class="t" style="left:1604.00px;top:284.30px;font-size:15px;color:#1a1a1a;font-weight:400;letter-spacing:0.401px;">Manufacturing</div>
<div class="t" style="left:27.00px;top:326.30px;font-size:15px;color:#1a1a1a;font-weight:400;letter-spacing:0.266px;">POL-1002</div>
<div class="t" style="left:157.00px;top:326.30px;font-size:15px;color:#1a1a1a;font-weight:400;letter-spacing:0.279px;">CUST-1593</div>
<div class="t" style="left:313.00px;top:326.30px;font-size:15px;color:#1a1a1a;font-weight:400;letter-spacing:0.235px;">Perkins, Lambert and Fry</div>
<div class="t" style="left:569.00px;top:326.30px;font-size:15px;color:#1a1a1a;font-weight:400;letter-spacing:1.108px;">4595679</div>
<div class="t" style="left:764.00px;top:326.30px;font-size:15px;color:#1a1a1a;font-weight:400;letter-spacing:0.125px;">28109</div>
<div class="t" style="left:958.00px;top:326.30px;font-size:15px;color:#1a1a1a;font-weight:400;letter-spacing:1.111px;">2025-09-24</div>
<div class="t" style="left:1109.00px;top:326.30px;font-size:15px;color:#1a1a1a;font-weight:400;letter-spacing:0.444px;">Retail</div>
<div class="t" style="left:1312.00px;top:326.30px;font-size:15px;color:#1a1a1a;font-weight:400;letter-spacing:0.444px;">Active</div>
<div class="t" style="left:1421.00px;top:326.30px;font-size:15px;color:#1a1a1a;font-weight:400;letter-spacing:0.342px;">Commercial Property</div>
<div class="t" style="left:1604.00px;top:326.30px;font-size:15px;color:#1a1a1a;font-weight:400;letter-spacing:0.444px;">Retail</div>
<div class="t" style="left:27.00px;top:368.30px;font-size:15px;color:#1a1a1a;font-weight:400;letter-spacing:0.266px;">POL-1007</div>
<div class="t" style="left:157.00px;top:368.30px;font-size:15px;color:#1a1a1a;font-weight:400;letter-spacing:-0.252px;">CUST-1187</div>
<div class="t" style="left:313.00px;top:368.30px;font-size:15px;color:#1a1a1a;font-weight:400;letter-spacing:0.314px;">Newton PLC</div>
<div class="t" style="left:569.00px;top:368.30px;font-size:15px;color:#1a1a1a;font-weight:400;letter-spacing:-0.308px;">3714871</div>
<div class="t" style="left:764.00px;top:368.30px;font-size:15px;color:#1a1a1a;font-weight:400;letter-spacing:-0.937px;">11726</div>
<div class="t" style="left:958.00px;top:368.30px;font-size:15px;color:#1a1a1a;font-weight:400;letter-spacing:0.639px;">2026-05-16</div>
<div class="t" style="left:1109.00px;top:368.30px;font-size:15px;color:#1a1a1a;font-weight:400;letter-spacing:0.411px;">Technology</div>
<div class="t" style="left:1312.00px;top:368.30px;font-size:15px;color:#1a1a1a;font-weight:400;letter-spacing:0.444px;">Active</div>
<div class="t" style="left:1421.00px;top:368.30px;font-size:15px;color:#1a1a1a;font-weight:400;letter-spacing:0.342px;">Commercial Property</div>
<div class="t" style="left:1604.00px;top:368.30px;font-size:15px;color:#1a1a1a;font-weight:400;letter-spacing:0.411px;">Technology</div>
</div>
<div class="r" style="left:1763px;top:386px;width:12px;height:88px;background:#c8c8c8;border-radius:6px"></div>
<div class="r" style="left:127px;top:755px;width:1130px;height:12px;background:#cbcbcb;border-radius:6px"></div>
<div class="r" style="left:97px;top:780px;width:1708px;height:1px;background:#e0e0e0"></div>
<div class="t" style="left:1544.80px;top:813.46px;font-size:18px;color:#2a4bd6;font-weight:400;letter-spacing:0.780px;text-decoration:underline;text-underline-offset:2px">Cancel</div>
<div class="r" style="left:1641px;top:799px;width:137px;height:47px;background:#2546e0;border-radius:5px"></div>
<div class="t" style="left:1669.00px;top:813.06px;font-size:18px;color:#fff;font-weight:700;letter-spacing:0.114px;">Schedule</div>
<div class="r" style="left:1081px;top:643px;width:105px;height:43px;background:#fff;border-radius:8px;border:1px solid rgba(0,0,0,0.25);box-sizing:border-box;box-shadow:4px 4px 7px rgba(0,0,0,0.5)"></div>
<div class="t" style="left:1090.60px;top:656.40px;font-size:15px;color:#222;font-weight:400;letter-spacing:0.856px;">2025-09-18</div>
<div class="r" style="left:1208px;top:663px;width:117px;height:38px;background:#fff;border:2px solid #111;box-sizing:border-box"></div>
<div class="t" style="left:1220.20px;top:674.61px;font-size:17px;color:#222;font-weight:400;letter-spacing:0.478px;">2025-09-18</div>
<svg class="r" style="left:1192px;top:639px" width="22" height="30" viewBox="0 0 22 30"><path d="M1.3 1.3 V24.4 L6.6 20.4 L10.8 27.1 L14.4 25.6 L11.8 19.6 L18.6 19.4 Z" fill="#fff" stroke="#111" stroke-width="1.15" stroke-linejoin="miter"/></svg>
</body></html>
